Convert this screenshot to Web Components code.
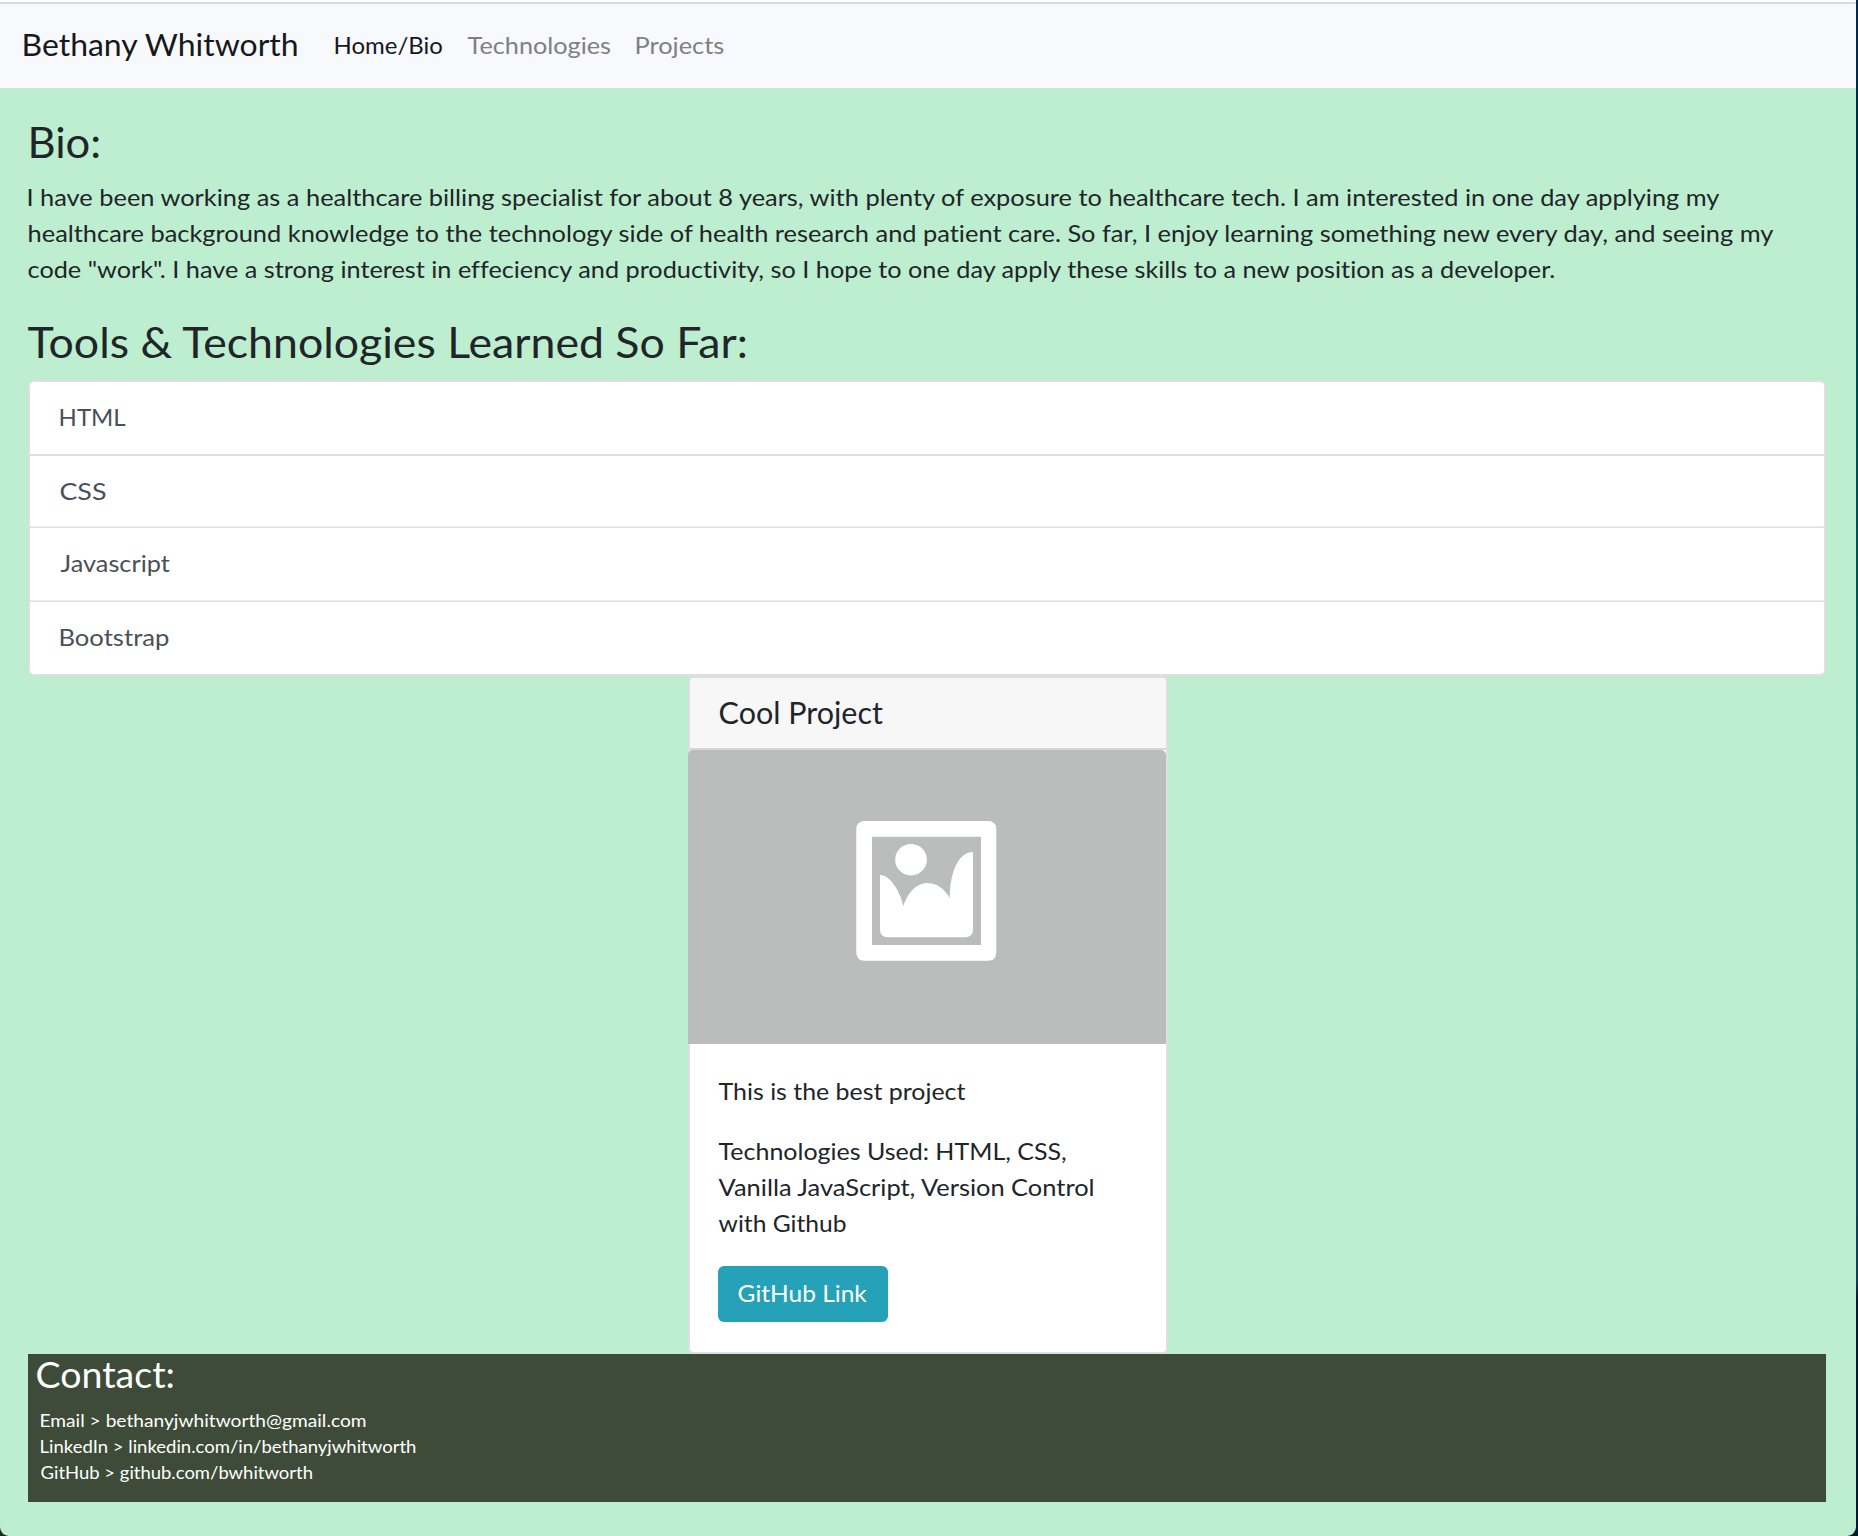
<!DOCTYPE html>
<html lang="en">
<head>
<meta charset="utf-8">
<title>Bethany Whitworth</title>
<style>
html,body{margin:0;height:1536px;overflow:hidden}
body{font-family:Lato,"Open Sans",sans-serif;font-size:24px;line-height:36px;font-variant-ligatures:none;color:#212529;background:linear-gradient(90deg,#26282c 50%,transparent 50%),linear-gradient(#002b44 0,#002b44 180px,#01484d 400px,#0b5550 700px,#1a6e5c 980px,#13485a 1080px,#123c56 1280px,#04192e 1300px)}
</style>
</head>
<body>
<portfolio-page></portfolio-page>
<script>
const ctx = document.createElement('canvas').getContext('2d');

// One line of text widened so that its visible ink spans the given width.
class TextLine extends HTMLElement {
  connectedCallback() {
    const root = this.attachShadow({mode: 'open'});
    root.innerHTML = '<style>:host{display:block;white-space:nowrap}span{display:inline-block;transform-origin:0 50%}</style><span><slot></slot></span>';
    const text = this.textContent, cs = getComputedStyle(this), span = +this.getAttribute('span');
    const run = root.querySelector('span');
    ctx.font = `${cs.fontWeight} ${cs.fontSize} ${cs.fontFamily}`;
    const m = ctx.measureText(text);
    const bearings = m.width - m.actualBoundingBoxLeft - m.actualBoundingBoxRight;
    const scale = span / (run.getBoundingClientRect().width - bearings);
    this.style.width = span + 'px';
    run.style.transform = `translateX(${m.actualBoundingBoxLeft * scale - 0.4}px) scaleX(${scale})`;
  }
}

const define = (name, html) => customElements.define(name, class extends HTMLElement {
  connectedCallback() {
    if (!this.shadowRoot) this.attachShadow({mode: 'open'}).innerHTML = html;
  }
});

define('site-nav', `<style>
:host{display:flex;box-sizing:border-box;height:88px;border-top:2px solid #fff;background:#f8f9fc;box-shadow:inset 0 2px #dadce0;padding:24px 24px 0}
.brand{font-size:30px;color:#17181a;margin-right:39.2px}
nav{display:flex;gap:25.5px;padding-top:1px;color:#7f8082}
.on{color:#17181a}
</style>
<text-line class="brand" span="273.2">Bethany Whitworth</text-line>
<nav><text-line class="on" span="106.6">Home/Bio</text-line><text-line span="143">Technologies</text-line><text-line span="87.2">Projects</text-line></nav>`);

define('section-title', `<style>
:host{display:block;font-size:42px;line-height:50px}
h2{font:inherit;margin:0}
</style><h2><slot></slot></h2>`);

define('tech-list', `<style>
:host{display:flex;flex-direction:column;border:2px solid #dfdfdf;border-radius:6px;background:#fff;color:#495057;overflow:hidden}
</style><slot></slot>`);

define('tech-item', `<style>
:host{display:block;padding:17px 0 19px 30.5px;border-bottom:2px solid #dfdfdf}
:host(.short){padding-bottom:17px}
:host(.thin){border-bottom:1px solid #dfdfdf;box-shadow:inset 0 -1px #efefef}
:host(.thin.short){padding-bottom:18px}
:host(.thin:not(.short)){padding-bottom:20px}
:host(:last-child){border-bottom:0}
</style><slot></slot>`);

define('placeholder-image', `<style>:host{display:block;height:294px;margin:0 0 0 -2px;border-radius:5px 5px 0 0;background:#bbbdbc}svg{display:block}</style>
<svg width="478" height="294" viewBox="688 750 478 294" fill="#fff">
<path fill-rule="evenodd" d="M865 821H988Q996.300 821 996.300 829.500V952Q996.300 960.700 988 960.700H865Q856.300 960.700 856.300 952V829.500Q856.300 821 865 821ZM872 836.700V945H981V836.700Z"/>
<circle cx="911" cy="859.700" r="15.800"/>
<path d="M880 875C890 875 900 891 903.300 906C908 892 917 883 927 883C936 883 944 888 949.700 898C950 873 958 852 973 852V929.500Q973 937.200 965 937.200H888Q880 937.200 880 929.500Z"/>
</svg>`);

define('link-button', `<style>
:host{display:block;box-sizing:border-box;width:170px;height:56px;padding:9px 0 0 21px;border-radius:6px;background:#25a2b8;color:#fff}
</style><slot></slot>`);

define('project-card', `<style>
:host{display:block;box-sizing:border-box;width:480px;height:678px;margin-left:660px;border:2px solid #dfdfdf;border-radius:6px;background:#fff}
header{padding:16px 0 18px 29.7px;font-size:30px;border-bottom:2px solid #d6d6d6;background:#f7f7f7;border-radius:4px 4px 0 0}
.body{padding:29px 0 0 29.3px}
.tech{margin:24px 0 25px}
link-button{margin-left:-1.3px}
</style>
<header><text-line span="163.6">Cool Project</text-line></header>
<placeholder-image></placeholder-image>
<div class="body">
<text-line span="247.200">This is the best project</text-line>
<div class="tech"><text-line span="347.7">Technologies Used: HTML, CSS,</text-line><text-line span="374.2">Vanilla JavaScript, Version Control</text-line><text-line span="127.5">with Github</text-line></div>
<link-button><text-line span="129">GitHub Link</text-line></link-button>
</div>`);

define('contact-footer', `<style>
:host{display:block;box-sizing:border-box;height:148px;padding-left:9px;background:#3d4b38;color:#fff}
.title{font-size:36px;line-height:41px}
.links{margin-top:13px;padding-left:3.7px;font-size:17.4px;line-height:26px}
</style>
<text-line class="title" span="136.300">Contact:</text-line>
<div class="links"><text-line span="325.600">Email &gt; bethanyjwhitworth@gmail.com</text-line><text-line span="375">LinkedIn &gt; linkedin.com/in/bethanyjwhitworth</text-line><text-line span="271.600">GitHub &gt; github.com/bwhitworth</text-line></div>`);

define('portfolio-page', `<style>
:host{display:block;width:1856px;height:1536px;background:#bdeecf;border-radius:0 0 9px 9px;overflow:hidden}
main{display:flex;flex-direction:column;padding:29px 30px 0 28px}
.bio{padding:12px 0 30px 1.2px}
.bio-title{padding-left:3px}
tech-list{margin-top:13px}
</style>
<site-nav></site-nav>
<main>
<section-title class="bio-title"><text-line span="68">Bio:</text-line></section-title>
<div class="bio"><text-line span="1691.500">I have been working as a healthcare billing specialist for about 8 years, with plenty of exposure to healthcare tech. I am interested in one day applying my</text-line><text-line span="1745.500">healthcare background knowledge to the technology side of health research and patient care. So far, I enjoy learning something new every day, and seeing my</text-line><text-line span="1526">code "work". I have a strong interest in effeciency and productivity, so I hope to one day apply these skills to a new position as a developer.</text-line></div>
<section-title><text-line span="717.600">Tools &amp; Technologies Learned So Far:</text-line></section-title>
<tech-list>
<tech-item><text-line span="64.700">HTML</text-line></tech-item>
<tech-item class="thin short"><text-line span="44.700">CSS</text-line></tech-item>
<tech-item class="thin"><text-line span="109.600">Javascript</text-line></tech-item>
<tech-item><text-line span="108.300">Bootstrap</text-line></tech-item>
</tech-list>
<project-card></project-card>
<contact-footer></contact-footer>
</main>`);

customElements.define('text-line', TextLine);
</script>
</body>
</html>
